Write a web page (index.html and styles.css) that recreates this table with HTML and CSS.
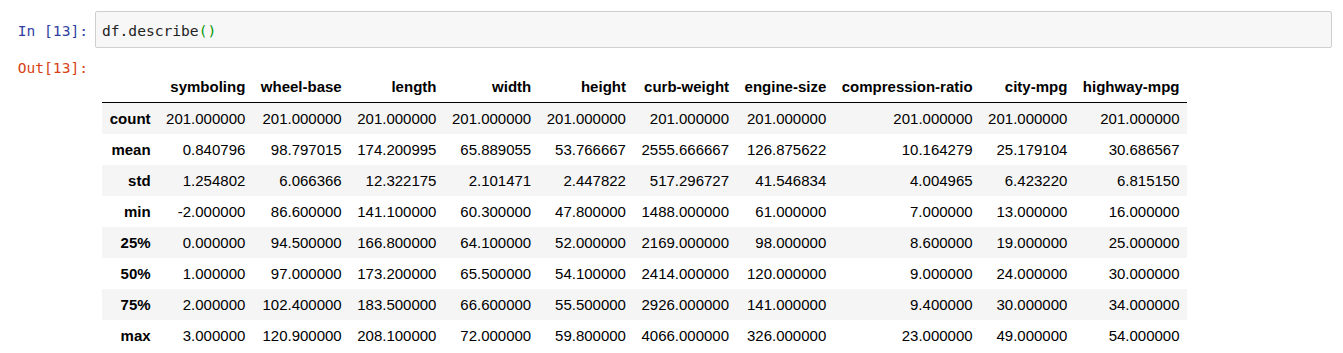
FILE: index.html
```html
<!DOCTYPE html>
<html lang="en">
  <head>
    <meta charset="utf-8" />
    <title>df.describe()</title>
    <link rel="stylesheet" href="styles.css">
  </head>
  <body>
    <div class="cell">
      <div class="input-row">
        <div class="prompt input-prompt">In&nbsp;[13]:</div>
        <div class="input-area">
          <span class="code">df.describe<span class="bracket">()</span></span>
        </div>
      </div>

      <div class="output-row">
        <div class="prompt output-prompt">Out[13]:</div>
        <div class="output-subarea">
          <table class="dataframe">
            <thead>
              <tr>
                <th></th>
                <th>symboling</th>
                <th>wheel-base</th>
                <th>length</th>
                <th>width</th>
                <th>height</th>
                <th>curb-weight</th>
                <th>engine-size</th>
                <th>compression-ratio</th>
                <th>city-mpg</th>
                <th>highway-mpg</th>
              </tr>
            </thead>
            <tbody>
              <tr>
                <th>count</th>
                <td>201.000000</td><td>201.000000</td><td>201.000000</td><td>201.000000</td><td>201.000000</td>
                <td>201.000000</td><td>201.000000</td><td>201.000000</td><td>201.000000</td><td>201.000000</td>
              </tr>
              <tr>
                <th>mean</th>
                <td>0.840796</td><td>98.797015</td><td>174.200995</td><td>65.889055</td><td>53.766667</td>
                <td>2555.666667</td><td>126.875622</td><td>10.164279</td><td>25.179104</td><td>30.686567</td>
              </tr>
              <tr>
                <th>std</th>
                <td>1.254802</td><td>6.066366</td><td>12.322175</td><td>2.101471</td><td>2.447822</td>
                <td>517.296727</td><td>41.546834</td><td>4.004965</td><td>6.423220</td><td>6.815150</td>
              </tr>
              <tr>
                <th>min</th>
                <td>-2.000000</td><td>86.600000</td><td>141.100000</td><td>60.300000</td><td>47.800000</td>
                <td>1488.000000</td><td>61.000000</td><td>7.000000</td><td>13.000000</td><td>16.000000</td>
              </tr>
              <tr>
                <th>25%</th>
                <td>0.000000</td><td>94.500000</td><td>166.800000</td><td>64.100000</td><td>52.000000</td>
                <td>2169.000000</td><td>98.000000</td><td>8.600000</td><td>19.000000</td><td>25.000000</td>
              </tr>
              <tr>
                <th>50%</th>
                <td>1.000000</td><td>97.000000</td><td>173.200000</td><td>65.500000</td><td>54.100000</td>
                <td>2414.000000</td><td>120.000000</td><td>9.000000</td><td>24.000000</td><td>30.000000</td>
              </tr>
              <tr>
                <th>75%</th>
                <td>2.000000</td><td>102.400000</td><td>183.500000</td><td>66.600000</td><td>55.500000</td>
                <td>2926.000000</td><td>141.000000</td><td>9.400000</td><td>30.000000</td><td>34.000000</td>
              </tr>
              <tr>
                <th>max</th>
                <td>3.000000</td><td>120.900000</td><td>208.100000</td><td>72.000000</td><td>59.800000</td>
                <td>4066.000000</td><td>326.000000</td><td>23.000000</td><td>49.000000</td><td>54.000000</td>
              </tr>
            </tbody>
          </table>
        </div>
      </div>
    </div>
  </body>
</html>
```

FILE: styles.css
```css
:root {
  --in-color: #303f9f;
  --out-color: #d84315;
  --stripe-color: #f5f5f5;
  --input-bg: #f7f7f7;
  --input-border: #cfcfcf;
}

body {
  margin: 0;
  padding: 11px 11px 0 0;
  background-color: #ffffff;
  color: #000000;
  font-family: "Liberation Sans", Arial, sans-serif;
}

.input-row,
.output-row {
  display: flex;
  align-items: flex-start;
}

.prompt {
  width: 95px;
  flex-shrink: 0;
  box-sizing: border-box;
  padding-right: 7px;
  text-align: right;
  font-family: "DejaVu Sans Mono", "Liberation Mono", monospace;
  font-size: 14.6px;
  line-height: 20px;
}

.input-prompt {
  color: var(--in-color);
  padding-top: 10px;
}

.output-prompt {
  color: var(--out-color);
  padding-top: 6px;
}

.input-area {
  flex-grow: 1;
  height: 37px;
  box-sizing: border-box;
  padding: 9px 6px 0 6px;
  background-color: var(--input-bg);
  border: 1px solid var(--input-border);
  border-radius: 2px;
}

.code {
  font-family: "DejaVu Sans Mono", "Liberation Mono", monospace;
  font-size: 14.6px;
  line-height: 20px;
  color: #222222;
}

.bracket {
  color: #0a9a0a;
}

.output-row {
  margin-top: 4px;
}

.output-subarea {
  padding: 18px 0 0 7px;
}

.dataframe {
  border-collapse: collapse;
  border-spacing: 0;
  font-size: 15px;
  color: #000000;
}

.dataframe th,
.dataframe td {
  padding: 0 7.75px;
  white-space: nowrap;
  text-align: right;
  line-height: 17px;
}

.dataframe thead th {
  font-weight: bold;
  vertical-align: bottom;
  height: 32px;
  padding-bottom: 7px;
  box-sizing: border-box;
  border-bottom: 1px solid #000000;
}

.dataframe tbody th,
.dataframe tbody td {
  height: 31px;
  vertical-align: middle;
}

.dataframe tbody th {
  font-weight: bold;
}

.dataframe tbody tr:nth-child(odd) {
  background-color: var(--stripe-color);
}
```
